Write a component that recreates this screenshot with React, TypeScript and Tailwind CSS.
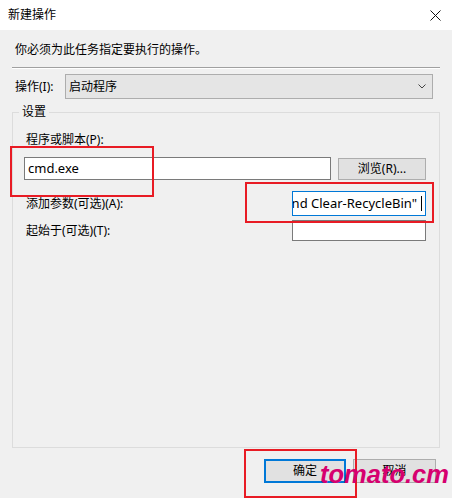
import React from "react";

const FONT = "font-['Noto_Sans','Noto_Sans_CJK_SC',sans-serif]";

function Row({ label, children }: { label: string; children?: React.ReactNode }) {
  return (
    <div className="flex items-center justify-between">
      <span className="pl-[2px] leading-[16px]">{label}</span>
      {children}
    </div>
  );
}

export default function App() {
  return (
    <div className={`relative w-[452px] h-[498px] overflow-hidden text-[12px] text-black ${FONT}`}>
      {/* title bar */}
      <div className="h-[30px] bg-white flex items-center justify-between pl-[8px] pr-[10px]">
        <span className="leading-[16px]">新建操作</span>
        <svg width="11" height="11" viewBox="0 0 11 11" className="mr-[1px]">
          <path d="M0.5 0.5 L10.5 10.5 M10.5 0.5 L0.5 10.5" stroke="#111" strokeWidth="1" />
        </svg>
      </div>

      <div className="h-[468px] bg-[#f0f0f0] px-[12px] flex flex-col">
        <div className="mt-[12px] pl-[3px] leading-[16px] h-[16px]">你必须为此任务指定要执行的操作。</div>
        <div className="mt-[9px] border-t border-[#a0a0a0] border-b border-b-white" />

        <div className="mt-[5px] flex items-center">
          <span className="w-[53px] pl-[3px] leading-[16px]">操作(I):</span>
          <div className="w-[368px] h-[25px] bg-[#e5e5e5] border border-[#adadad] flex items-center justify-between pl-[3px] pr-[6px]">
            <span className="leading-[16px]">启动程序</span>
            <svg width="8" height="5" viewBox="0 0 8 5">
              <path d="M0.5 0.5 L4 4 L7.5 0.5" fill="none" stroke="#444" strokeWidth="1" />
            </svg>
          </div>
        </div>

        {/* settings group */}
        <div className="relative mt-[13px] h-[336px] border border-[#dcdcdc] pl-[11px] pr-[13px]">
          <span className="absolute -top-[9px] left-[6px] px-[3px] bg-[#f0f0f0] leading-[16px]">设置</span>

          <div className="mt-[19px] pl-[2px] leading-[16px] h-[16px]">程序或脚本(P):</div>
          <div className="mt-[9px] flex items-center justify-between">
            <div className="w-[307px] h-[23px] bg-white border border-[#7a7a7a] flex items-center pl-[3px] text-[13px]">
              cmd.exe
            </div>
            <div className="w-[88px] h-[22px] bg-[#e1e1e1] border border-[#adadad] flex items-center justify-center">
              浏览(R)...
            </div>
          </div>

          <div className="mt-[11px]">
            <Row label="添加参数(可选)(A):">
              <div className="w-[134px] h-[25px] bg-white border border-[#0078d7] flex items-center justify-end overflow-hidden pr-[3px] text-[13px]">
                <span className="whitespace-nowrap">/c "PowerShell.exe -NoProfile -Command Clear-RecycleBin"</span>
                <span className="shrink-0 ml-[4px] w-[1px] h-[15px] bg-black" />
              </div>
            </Row>
          </div>

          <div className="mt-[4px]">
            <Row label="起始于(可选)(T):">
              <div className="w-[134px] h-[21px] bg-white border border-[#7a7a7a]" />
            </Row>
          </div>
        </div>

        <div className="mt-[11px] flex justify-end gap-[7px] pr-[4px]">
          <div className="w-[82px] h-[24px] bg-[#e1e1e1] border-2 border-[#0078d7] flex items-center justify-center">确定</div>
          <div className="w-[83px] h-[24px] bg-[#e1e1e1] border border-[#adadad] flex items-center justify-center">取消</div>
        </div>
      </div>

      {/* annotations */}
      <div className="absolute left-[10px] top-[146px] w-[144px] h-[51px] border-2 border-[#e81b24]" />
      <div className="absolute left-[245px] top-[182px] w-[189px] h-[41px] border-2 border-[#e81b24]" />
      <div className="absolute left-[244px] top-[449px] w-[113px] h-[49px] border-2 border-[#e81b24]" />
      <div className="absolute left-[320px] top-[458px] text-[25.5px] leading-[32px] font-bold italic text-[#d6006f] font-['Liberation_Sans',sans-serif]">
        tomato.cm
      </div>
    </div>
  );
}
